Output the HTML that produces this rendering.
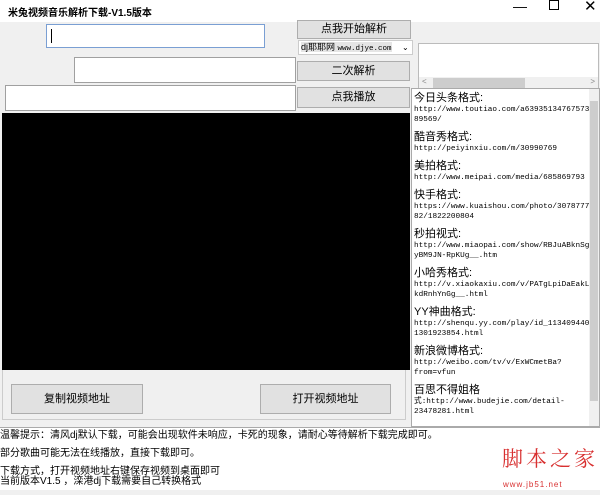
<!DOCTYPE html>
<html><head><meta charset="utf-8"><style>
*{margin:0;padding:0;box-sizing:border-box}
body{width:600px;height:495px;background:#f0f0f0;position:relative;overflow:hidden;font-family:"Liberation Sans","Noto Sans CJK SC",sans-serif;font-size:12px;color:#000}
.a{position:absolute}
.title{left:0;top:0;width:600px;height:22px;background:#fff}
.inp{background:#fff;border:1px solid #a0a0a0}
.btn{background:#e1e1e1;border:1px solid #adadad;text-align:center;font-size:11px}
.mono{font-family:"Liberation Mono","Noto Sans CJK SC",monospace;font-size:7.7px;line-height:10px;margin-bottom:6.5px;white-space:nowrap}
.cn{font-size:11px;line-height:12.5px}
</style></head><body>
<div class="a title"></div>
<div class="a" style="left:8px;top:4px;font-size:10px;font-weight:bold">米兔视频音乐解析下载-V1.5版本</div>
<div class="a" style="left:513px;top:-2px;font-size:14px">—</div>
<div class="a" style="left:549px;top:0;width:10px;height:10px;border:1px solid #000"></div>
<div class="a" style="left:584px;top:-3px;font-size:15px">✕</div>

<div class="a inp" style="left:46px;top:24px;width:219px;height:24px;border-color:#7a9fd3"><div style="position:absolute;left:4px;top:4px;width:1px;height:14px;background:#000"></div></div>
<div class="a btn" style="left:297px;top:20px;width:114px;height:19px;line-height:17px">点我开始解析</div>
<div class="a" style="left:298px;top:40px;width:115px;height:15px;background:#fff;border:1px solid #ccc;font-size:9px;line-height:13px;padding-left:2px;white-space:nowrap;overflow:hidden"><span style="background:#e5e5e5">dj耶耶网 <span style="font-family:'Liberation Mono',monospace;font-size:7.5px">www.djye.com</span></span><span style="position:absolute;right:1px;top:0;width:9px;background:#fff;font-size:8px">⌄</span></div>
<div class="a" style="left:418px;top:43px;width:181px;height:48px;background:#fff;border:1px solid #bbb"><div style="position:absolute;left:0;bottom:0;width:100%;height:13px;background:#f0f0f0"><div style="position:absolute;left:14px;top:1px;width:92px;height:11px;background:#cdcdcd"></div><span style="position:absolute;left:3px;top:0;font-size:8px;color:#888">&lt;</span><span style="position:absolute;right:3px;top:0;font-size:8px;color:#888">&gt;</span></div></div>

<div class="a inp" style="left:74px;top:57px;width:222px;height:26px"></div>
<div class="a btn" style="left:297px;top:61px;width:113px;height:20px;line-height:18px">二次解析</div>
<div class="a inp" style="left:5px;top:85px;width:291px;height:26px"></div>
<div class="a btn" style="left:297px;top:87px;width:113px;height:21px;line-height:19px">点我播放</div>

<div class="a" style="left:2px;top:113px;width:408px;height:257px;background:#000"></div>
<div class="a" style="left:2px;top:370px;width:404px;height:50px;border:1px solid #ccc;border-top:none"></div>
<div class="a btn" style="left:11px;top:384px;width:132px;height:30px;line-height:28px">复制视频地址</div>
<div class="a btn" style="left:260px;top:384px;width:131px;height:30px;line-height:28px">打开视频地址</div>

<div class="a" style="left:411px;top:88px;width:189px;height:339px;background:#fff;border:1px solid #aaa;overflow:hidden;padding:3px 0 0 2px">
<div style="position:absolute;right:0;top:0;width:10px;height:100%;background:#f0f0f0"><div style="position:absolute;left:1px;top:12px;width:8px;height:300px;background:#cdcdcd"></div></div>
<div class="cn">今日头条格式:</div><div class="mono">http://www.toutiao.com/a63935134767573<br>89569/</div>
<div class="cn">酷音秀格式:</div><div class="mono">http://peiyinxiu.com/m/30990769</div>
<div class="cn">美拍格式:</div><div class="mono">http://www.meipai.com/media/685869793</div>
<div class="cn">快手格式:</div><div class="mono">https://www.kuaishou.com/photo/3078777<br>82/1822200804</div>
<div class="cn">秒拍视式:</div><div class="mono">http://www.miaopai.com/show/RBJuABknSg<br>yBM9JN-RpKUg__.htm</div>
<div class="cn">小哈秀格式:</div><div class="mono">http://v.xiaokaxiu.com/v/PATgLpiDaEakL<br>kdRnhYnGg__.html</div>
<div class="cn">YY神曲格式:</div><div class="mono">http://shenqu.yy.com/play/id_113409440<br>1301923854.html</div>
<div class="cn">新浪微博格式:</div><div class="mono">http://weibo.com/tv/v/ExWCmetBa?<br>from=vfun</div>
<div class="cn">百思不得姐格</div><div class="mono">式:http://www.budejie.com/detail-<br>23478281.html</div>
</div>

<div class="a" style="left:0;top:427px;width:600px;height:63px;background:#fff;border-top:1px solid #aaa;font-size:10px;line-height:12px">
<div class="a" style="left:0;top:2px">温馨提示：清风dj默认下载，可能会出现软件未响应，卡死的现象，请耐心等待解析下载完成即可。</div>
<div class="a" style="left:0;top:20px">部分歌曲可能无法在线播放，直接下载即可。</div>
<div class="a" style="left:0;top:38px">下载方式，打开视频地址右键保存视频到桌面即可</div>
<div class="a" style="left:0;top:48px">当前版本V1.5 ，滦港dj下载需要自己转换格式</div>
<div class="a" style="left:502px;top:24px;font-size:21px;color:#d83030;letter-spacing:3px;font-family:'Noto Serif CJK SC',serif">脚本之家</div>
<div class="a" style="left:503px;top:51px;font-size:8px;color:#d83030;letter-spacing:1px">www.jb51.net</div>
</div>
</body></html>
